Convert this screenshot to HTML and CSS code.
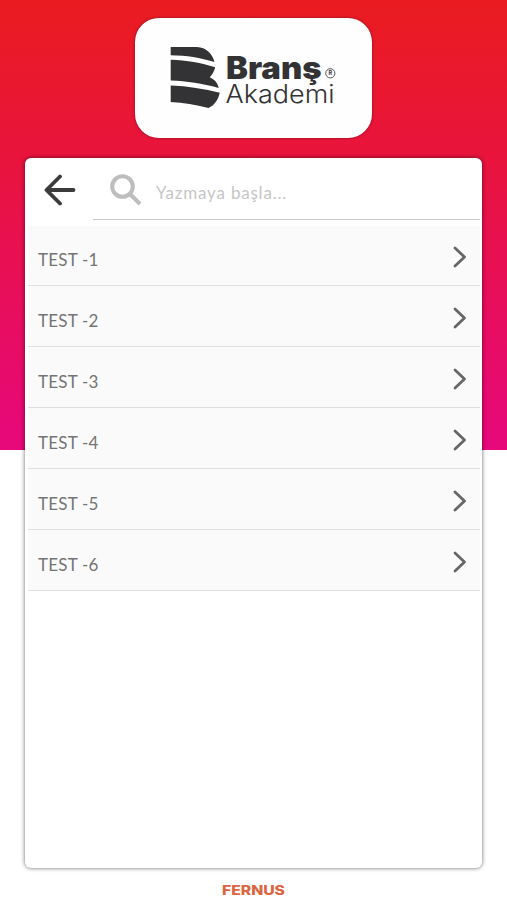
FILE: index.html
```html
<!DOCTYPE html>
<html lang="tr">
<head>
<meta charset="utf-8">
<meta name="viewport" content="width=device-width, initial-scale=1">
<title>Branş Akademi</title>
<link rel="stylesheet" href="styles.css">
</head>
<body>
<div class="app">
  <header class="brand">
    <svg class="brand-logo" viewBox="135 18 237 120" role="img" aria-label="Branş Akademi">
      <g class="mark">
        <path d="M170.7 47H197C206 47.500 212.500 53.500 214.500 62C200 57.500 187 55.500 170.700 55.200Z"/>
        <path d="M170.700 59.800C187 60.300 201 63 215.200 67.300C214.300 71 212.500 74.500 209.800 77.300C214.500 79.500 217.800 83 218.700 88C202 83.500 187 81.200 170.700 80.600Z"/>
        <path d="M170.700 85.600C188 86.200 204 89 219.700 92.800C218.500 99 214.500 105.500 208.500 108C195 104.500 184 102.700 170.700 102Z"/>
      </g>
      <text class="name" x="226" y="78.700" textLength="95.500" lengthAdjust="spacingAndGlyphs">Branş</text>
      <text class="sub" x="225.500" y="102.700" textLength="109" lengthAdjust="spacingAndGlyphs">Akademi</text>
      <circle class="reg-ring" cx="330.300" cy="73.300" r="4.600"/>
      <text class="reg" x="330.400" y="75.300" text-anchor="middle">R</text>
    </svg>
  </header>

  <main class="panel">
    <div class="toolbar">
      <svg class="back" viewBox="0 0 32 32"><path d="M16 2.500L2.500 16L16 29.500M3 16H29.500"/></svg>
      <div class="search">
        <svg class="lens" viewBox="0 0 32 32"><circle cx="12.500" cy="12.500" r="10.300"/><path d="M20 20L30 30"/></svg>
        <span class="placeholder">Yazmaya başla...</span>
      </div>
    </div>
    <ul class="tests">
      <li><span>TEST -1</span><svg class="chevron" viewBox="0 0 14 22"><path d="M2 2L11.500 11L2 20"/></svg></li>
      <li><span>TEST -2</span><svg class="chevron" viewBox="0 0 14 22"><path d="M2 2L11.500 11L2 20"/></svg></li>
      <li><span>TEST -3</span><svg class="chevron" viewBox="0 0 14 22"><path d="M2 2L11.500 11L2 20"/></svg></li>
      <li><span>TEST -4</span><svg class="chevron" viewBox="0 0 14 22"><path d="M2 2L11.500 11L2 20"/></svg></li>
      <li><span>TEST -5</span><svg class="chevron" viewBox="0 0 14 22"><path d="M2 2L11.500 11L2 20"/></svg></li>
      <li><span>TEST -6</span><svg class="chevron" viewBox="0 0 14 22"><path d="M2 2L11.500 11L2 20"/></svg></li>
    </ul>
  </main>

  <footer class="footer">
    <svg class="footer-logo" viewBox="0 0 64 14"><text x="0" y="11" textLength="63" lengthAdjust="spacingAndGlyphs">FERNUS</text></svg>
  </footer>
</div>
</body>
</html>
```
FILE: styles.css
```css
* {
  box-sizing: border-box;
}

body {
  margin: 0;
  font-family: Lato, "Noto Sans", sans-serif;
  background: #fff;
}

.app {
  display: flex;
  flex-direction: column;
  align-items: center;
  height: 900px;
  padding-top: 18px;
  background: linear-gradient(#ea1c20, #e9143c 34%, #e7087c) no-repeat 0 0 / 100% 450px;
}

.brand {
  width: 237px;
  height: 120px;
  border-radius: 24px;
  background: #fefefe;
  box-shadow: 0 0 3px rgba(70, 0, 20, 0.6);
}

.brand-logo {
  display: block;
  width: 237px;
  height: 120px;
}

.mark,
.name,
.sub,
.reg {
  fill: #333234;
}

.name {
  font: 900 31px Inter, sans-serif;
}

.sub {
  font: 300 25px Inter, sans-serif;
}

.reg {
  font: 700 5.5px Inter, sans-serif;
}

.reg-ring {
  fill: none;
  stroke: #444;
  stroke-width: 0.9;
}

.panel {
  width: 457px;
  height: 710px;
  margin-top: 20px;
  padding: 0 2px 0 3px;
  border-radius: 6px;
  background: #fff;
  box-shadow: 0 0 4px rgba(0, 0, 0, 0.6);
}

.toolbar {
  display: flex;
  height: 68px;
}

.back {
  width: 32px;
  height: 32px;
  margin: 16px 17px 0 16px;
  fill: none;
  stroke: #3b3b3b;
  stroke-width: 3.8;
  stroke-linecap: round;
  stroke-linejoin: round;
}

.search {
  display: flex;
  flex: 1;
  height: 62px;
  padding-left: 17px;
  border-bottom: 1.5px solid #c8c8c8;
}

.lens {
  width: 32px;
  height: 32px;
  margin-top: 16px;
  fill: none;
  stroke: #bdbdbd;
  stroke-width: 4;
}

.placeholder {
  margin: 24px 0 0 14px;
  font-size: 17px;
  line-height: 22px;
  letter-spacing: 0.8px;
  color: #c6c6c6;
}

.tests {
  margin: 0;
  padding: 0;
  list-style: none;
}

.tests li {
  display: flex;
  align-items: center;
  justify-content: space-between;
  height: 61.1px;
  padding: 0 13px 0 10px;
  border-bottom: 1px solid #dfdfdf;
  background: #fafafa;
  color: #747474;
  font-size: 17px;
  line-height: 22px;
  letter-spacing: 0.2px;
}

.tests li:first-child {
  height: 60px;
}

.tests span {
  padding-top: 9px;
}

.tests li:first-child span {
  padding-top: 8px;
}

.chevron {
  width: 14px;
  height: 22px;
  margin-top: 4px;
  fill: none;
  stroke: #666;
  stroke-width: 2.8;
  stroke-linecap: round;
  stroke-linejoin: round;
}

.tests li:first-child .chevron {
  margin-top: 2px;
}

.footer {
  padding-top: 16px;
}

.footer-logo {
  display: block;
  width: 64px;
  height: 14px;
  margin-left: 1px;
  fill: #dc6540;
  font: 800 12.5px Inter, sans-serif;
}
```
